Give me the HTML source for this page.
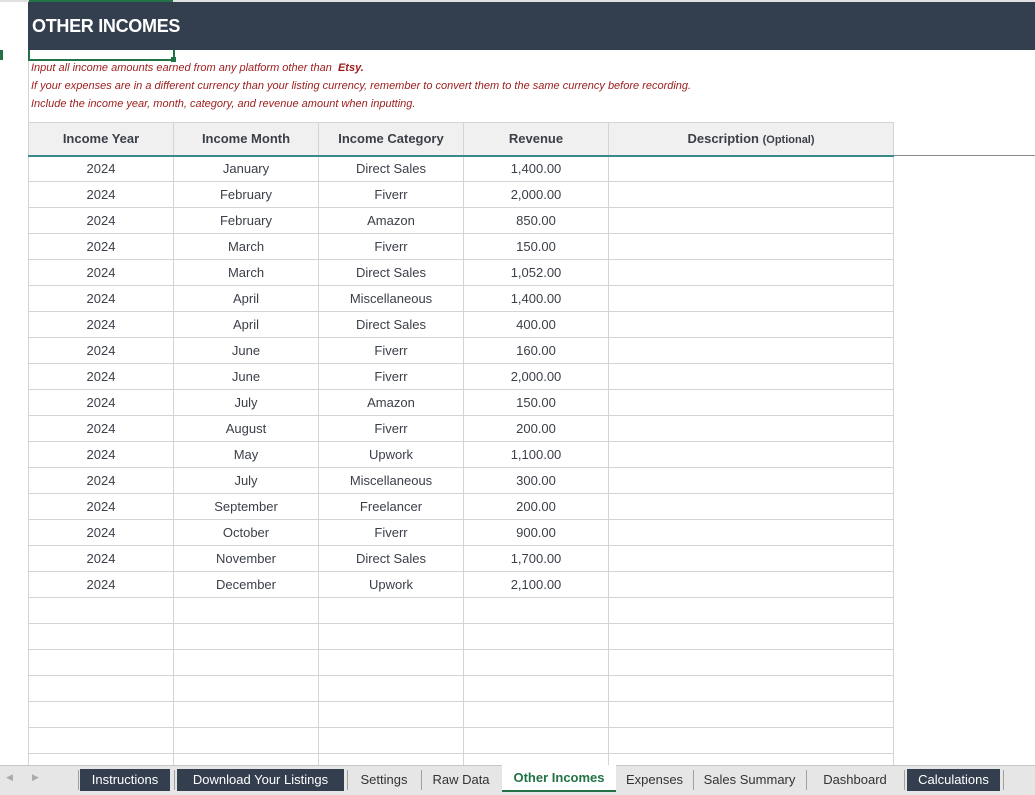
<!DOCTYPE html>
<html><head><meta charset="utf-8"><style>
*{margin:0;padding:0;box-sizing:border-box}
body{width:1035px;height:795px;overflow:hidden;background:#fff;font-family:"Liberation Sans",sans-serif;position:relative;color:#333f4f}
.abs{position:absolute}
.hdr{left:28px;top:2px;width:1007px;height:48px;background:#333f4f;color:#fff;font-weight:bold;font-size:18px;padding:14px 0 0 4px;letter-spacing:-0.3px}
.note{left:31px;font-style:italic;color:#9c1c1c;font-size:11px}
table{position:absolute;left:28px;top:122px;border-collapse:collapse;table-layout:fixed;width:865px}
td,th{border:1px solid #d4d4d4;text-align:center;font-size:13px;height:26px;color:#3a3f48;padding:0}
th{background:#f0f0f0;height:33px;font-weight:bold;border-bottom:2px solid #3a8a8a}
th small{font-size:11px}
.tabs{left:0;top:765px;width:1035px;height:30px;background:#e6e6e6;border-top:1px solid #c6c6c6}
.tab{position:absolute;top:3px;height:22px;font-size:13px;color:#333;padding-top:3px;text-align:center}
.dark{background:#333f4f;color:#fff}
.sep{position:absolute;top:4px;width:1px;height:20px;background:#a0a0a0}
</style></head><body>
<div class="abs" style="left:0;top:0;width:1035px;height:2px;background:#e0e0e0"></div>
<div class="abs" style="left:28px;top:0;width:145px;height:2px;background:#217346"></div>
<div class="abs" style="left:28px;top:0;width:1px;height:765px;background:#d4d4d4"></div>
<div class="abs" style="left:0;top:50px;width:3px;height:10px;background:#217346"></div>
<div class="abs hdr">OTHER INCOMES</div>
<div class="abs" style="left:28px;top:50px;width:147px;height:11px;border:2px solid #217346;border-top:none"></div>
<div class="abs" style="left:171px;top:57px;width:5px;height:5px;background:#217346"></div>
<div class="abs note" style="top:62px">Input all income amounts earned from any platform other than &nbsp;<b>Etsy.</b></div>
<div class="abs note" style="top:80px">If your expenses are in a different currency than your listing currency, remember to convert them to the same currency before recording.</div>
<div class="abs note" style="top:98px">Include the income year, month, category, and revenue amount when inputting.</div>
<div class="abs" style="left:893px;top:155px;width:142px;height:1px;background:#888"></div>
<table>
<colgroup><col style="width:145px"><col style="width:145px"><col style="width:145px"><col style="width:145px"><col style="width:285px"></colgroup>
<tr><th>Income Year</th><th>Income Month</th><th>Income Category</th><th>Revenue</th><th>Description <small>(Optional)</small></th></tr>
<tr><td>2024</td><td>January</td><td>Direct Sales</td><td>1,400.00</td><td></td></tr>
<tr><td>2024</td><td>February</td><td>Fiverr</td><td>2,000.00</td><td></td></tr>
<tr><td>2024</td><td>February</td><td>Amazon</td><td>850.00</td><td></td></tr>
<tr><td>2024</td><td>March</td><td>Fiverr</td><td>150.00</td><td></td></tr>
<tr><td>2024</td><td>March</td><td>Direct Sales</td><td>1,052.00</td><td></td></tr>
<tr><td>2024</td><td>April</td><td>Miscellaneous</td><td>1,400.00</td><td></td></tr>
<tr><td>2024</td><td>April</td><td>Direct Sales</td><td>400.00</td><td></td></tr>
<tr><td>2024</td><td>June</td><td>Fiverr</td><td>160.00</td><td></td></tr>
<tr><td>2024</td><td>June</td><td>Fiverr</td><td>2,000.00</td><td></td></tr>
<tr><td>2024</td><td>July</td><td>Amazon</td><td>150.00</td><td></td></tr>
<tr><td>2024</td><td>August</td><td>Fiverr</td><td>200.00</td><td></td></tr>
<tr><td>2024</td><td>May</td><td>Upwork</td><td>1,100.00</td><td></td></tr>
<tr><td>2024</td><td>July</td><td>Miscellaneous</td><td>300.00</td><td></td></tr>
<tr><td>2024</td><td>September</td><td>Freelancer</td><td>200.00</td><td></td></tr>
<tr><td>2024</td><td>October</td><td>Fiverr</td><td>900.00</td><td></td></tr>
<tr><td>2024</td><td>November</td><td>Direct Sales</td><td>1,700.00</td><td></td></tr>
<tr><td>2024</td><td>December</td><td>Upwork</td><td>2,100.00</td><td></td></tr>
<tr><td></td><td></td><td></td><td></td><td></td></tr>
<tr><td></td><td></td><td></td><td></td><td></td></tr>
<tr><td></td><td></td><td></td><td></td><td></td></tr>
<tr><td></td><td></td><td></td><td></td><td></td></tr>
<tr><td></td><td></td><td></td><td></td><td></td></tr>
<tr><td></td><td></td><td></td><td></td><td></td></tr>
<tr><td></td><td></td><td></td><td></td><td></td></tr>
</table>
<div class="abs tabs">
<span style="position:absolute;left:6px;top:6px;font-size:9px;color:#aaa">&#9664;</span>
<span style="position:absolute;left:32px;top:6px;font-size:9px;color:#aaa">&#9654;</span>
<div class="sep" style="left:78px"></div>
<div class="tab dark" style="left:80px;width:90px">Instructions</div>
<div class="sep" style="left:174px"></div>
<div class="tab dark" style="left:177px;width:167px">Download Your Listings</div>
<div class="sep" style="left:347px"></div>
<div class="tab" style="left:348px;width:72px">Settings</div>
<div class="sep" style="left:421px"></div>
<div class="tab" style="left:422px;width:78px">Raw Data</div>
<div class="tab" style="left:502px;top:-1px;height:27px;width:114px;background:#fff;color:#217346;font-weight:bold;padding-top:5px;border-bottom:2px solid #217346">Other Incomes</div>
<div class="tab" style="left:617px;width:75px">Expenses</div>
<div class="sep" style="left:693px"></div>
<div class="tab" style="left:694px;width:111px">Sales Summary</div>
<div class="sep" style="left:806px"></div>
<div class="tab" style="left:807px;width:96px">Dashboard</div>
<div class="sep" style="left:904px"></div>
<div class="tab dark" style="left:907px;width:93px">Calculations</div>
<div class="sep" style="left:1003px"></div>
</div>
</body></html>
